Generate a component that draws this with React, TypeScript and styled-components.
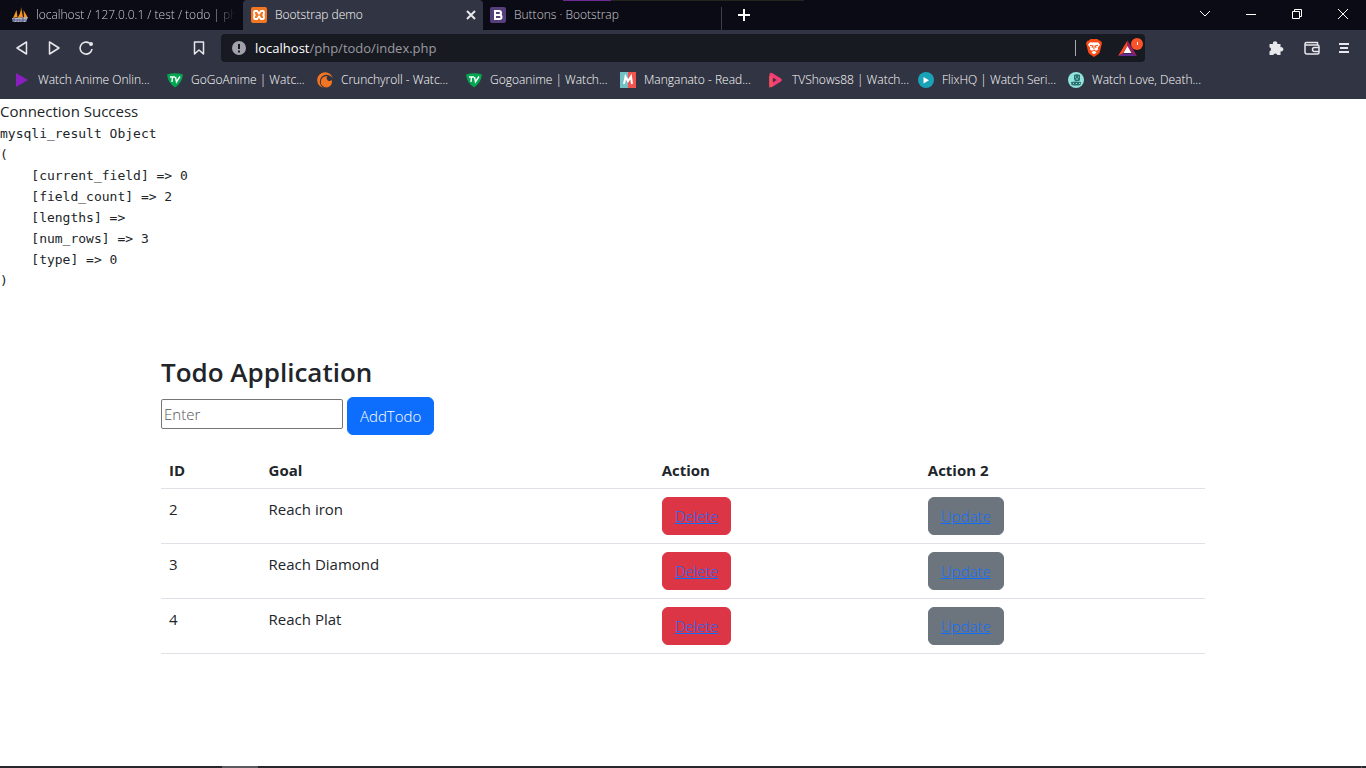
import React from "react";
import styled, { createGlobalStyle } from "styled-components";

const sans = `"Open Sans", "Noto Sans", sans-serif`;

const GlobalStyle = createGlobalStyle`
  *, *::before, *::after { box-sizing: border-box; }
  body { margin: 0; background: #fff; font-family: ${sans}; color: #212529; }
  button, input { font-family: inherit; }
  svg { display: block; flex: none; }
`;

const Window = styled.div`
  display: flex;
  flex-direction: column;
  min-height: 100vh;
`;

const Chrome = styled.header`
  background: #313442;
  color: #fff;
  height: 99px;
`;

const TabStrip = styled.div`
  position: relative;
  display: flex;
  align-items: stretch;
  height: 30px;
  background: #0b0b15;
`;

const TopEdge = styled.span`
  position: absolute;
  top: 0;
  left: 563px;
  width: 241px;
  height: 1px;
  background: linear-gradient(to right, #6b2a94 48px, #25251f 48px);
`;

const Tab = styled.div<{ $active?: boolean; $width: number; $inset: number }>`
  display: flex;
  align-items: center;
  gap: 8px;
  width: ${p => p.$width}px;
  padding: 0 7px 0 ${p => p.$inset}px;
  background: ${p => (p.$active ? "#313442" : "transparent")};
  border-radius: 4px 4px 0 0;
  color: ${p => (p.$active ? "#fff" : "#cdced2")};
  font-size: 12px;
  font-weight: 300;
  line-height: 16px;
`;

const TabTitle = styled.span<{ $fade?: boolean }>`
  flex: 1;
  min-width: 0;
  overflow: hidden;
  white-space: nowrap;
  ${p => p.$fade && "mask-image: linear-gradient(to right, #000 88%, transparent);"}
`;

const IconButton = styled.button`
  display: flex;
  align-items: center;
  justify-content: center;
  padding: 0;
  border: 0;
  background: transparent;
  color: #e8e8ec;
`;

const NewTab = styled(IconButton)`
  width: 46px;
  position: relative;
  color: #fff;
  &::before {
    content: "";
    position: absolute;
    left: 0;
    top: 7px;
    bottom: 0;
    width: 1px;
    background: #3c3d45;
  }
`;

const WindowControls = styled.div`
  display: flex;
  margin-left: auto;
`;

const ControlButton = styled(IconButton)`
  width: 46px;
  height: 28px;
  color: #fff;
`;

const Toolbar = styled.div`
  display: flex;
  align-items: center;
  height: 36px;
  padding: 0 17px 0 6px;
`;

const ToolButton = styled(IconButton)`
  width: 32px;
  height: 28px;
`;

const SaveButton = styled(ToolButton)`
  margin-left: 81px;
  margin-right: 6px;
`;

const AddressBar = styled.div`
  display: flex;
  align-items: center;
  gap: 9px;
  flex: 1;
  height: 28px;
  padding: 0 1px 0 11px;
  border-radius: 4px;
  background: #181a21;
`;

const Address = styled.a`
  flex: 1;
  color: #9a9ba1;
  font-size: 13px;
  line-height: 20px;
  text-decoration: none;
`;

const Host = styled.span`
  color: #fff;
`;

const Shields = styled.div`
  display: flex;
  align-items: center;
  gap: 16px;
  padding-left: 11px;
  background: linear-gradient(#aaabb0, #aaabb0) left center / 1px 16px no-repeat;
`;

const ToolGroup = styled.div`
  display: flex;
  align-items: center;
  justify-content: space-between;
  width: 81px;
  margin-left: 123px;
`;

const Bookmarks = styled.nav`
  display: flex;
  height: 28px;
  padding-left: 14px;
`;

const Bookmark = styled.a<{ $width: number }>`
  display: flex;
  align-items: center;
  gap: 8px;
  width: ${p => p.$width}px;
  color: #fff;
  font-size: 12px;
  font-weight: 300;
  line-height: 16px;
  white-space: nowrap;
  text-decoration: none;
`;

const Page = styled.main`
  flex: 1;
`;

const Message = styled.div`
  font-size: 15px;
  line-height: 24px;
`;

const Dump = styled.pre`
  margin: 0 0 65px;
  font-family: "DejaVu Sans Mono", monospace;
  font-size: 13px;
  line-height: 21px;
`;

const Container = styled.section`
  max-width: 1140px;
  margin: 0 auto;
  padding: 0 48px;
`;

const Title = styled.h1`
  margin: 0 0 8px;
  font-size: 26px;
  font-weight: 600;
  line-height: 33px;
`;

const TodoForm = styled.form`
  display: flex;
  align-items: flex-start;
  gap: 4px;
  margin-bottom: 13px;
`;

const GoalInput = styled.input`
  width: 182px;
  height: 30px;
  margin-top: 2px;
  padding: 1px 2px;
  border: 1px solid #767676;
  border-radius: 2px;
  font-size: 15px;
  font-weight: 300;
  &::placeholder { color: #555; }
`;

const tones = { primary: "#0d6efd", danger: "#dc3545", secondary: "#6c757d" };

const Button = styled.button<{ $tone: keyof typeof tones }>`
  display: block;
  height: 38px;
  padding: 0 12px;
  border: 1px solid ${p => tones[p.$tone]};
  border-radius: 6px;
  background: ${p => tones[p.$tone]};
  color: #fff;
  font-size: 15px;
  font-weight: 300;
  line-height: 24px;
  a { color: #0d6efd; }
`;

const Table = styled.table`
  width: 100%;
  border-collapse: collapse;
  font-size: 15px;
  line-height: 24px;
  th, td {
    padding: 8px;
    border-bottom: 1px solid #dee2e6;
    text-align: left;
    vertical-align: top;
  }
  th { padding: 10px 8px 6px; font-weight: 700; }
`;

const Taskbar = styled.footer`
  display: flex;
  height: 2px;
  padding: 0 4px 0 222px;
  justify-content: space-between;
  background: #29272b;
`;

const TaskItem = styled.span<{ $width: number }>`
  width: ${p => p.$width}px;
  background: #5c5a5e;
`;

const Play = () => (
  <svg width="16" height="16" viewBox="0 0 16 16"><path d="M2 1v14l12-7z" fill="#8a1fc0" /></svg>
);
const TvShield = () => (
  <svg width="16" height="16" viewBox="0 0 16 16">
    <path d="M0 2.500Q8 0 16 2.500Q15 11 8 15.500Q1 11 0 2.500z" fill="#05a651" />
    <path d="M3 5h5M5.500 5L5 10M8.500 5l1 5L13 4.500" fill="none" stroke="#fff" strokeWidth="1.400" />
  </svg>
);
const Crunchy = () => (
  <svg width="16" height="16" viewBox="0 0 16 16">
    <path d="M15.900 7A7.900 7.900 0 1 0 7 15.900A6.800 6.800 0 1 1 15.900 7z" fill="#f47521" />
    <path d="M15 9.500A5.600 5.600 0 1 1 10.500 4.300A2.400 2.400 0 1 0 14.500 8z" fill="#f47521" />
  </svg>
);
const MangaM = () => (
  <svg width="16" height="16" viewBox="0 0 16 16">
    <path d="M0 0h8v16H0z" fill="#72bfc4" /><path d="M8 0h8v16H8z" fill="#f0544f" />
    <path d="M4 12L5.500 4.500L8 9l3-4.500L12 12" fill="none" stroke="#fff" strokeWidth="2" />
  </svg>
);
const PinkPlay = () => (
  <svg width="16" height="16" viewBox="0 0 16 16">
    <path d="M3.200 2.500v11L12 8z" fill="none" stroke="#f43c72" strokeWidth="3.500" strokeLinejoin="round" />
    <path d="M2.500 4v9.500L5 12" fill="none" stroke="#f3525d" strokeWidth="2.500" />
  </svg>
);
const TealPlay = () => (
  <svg width="16" height="16" viewBox="0 0 16 16"><circle cx="8" cy="8" r="8" fill="#19a2b8" /><path d="M5.500 5v6.500l5.500-3.250z" fill="#fff" /></svg>
);
const Mint = () => (
  <svg width="16" height="16" viewBox="0 0 16 16">
    <circle cx="8" cy="8" r="8" fill="#8ee3dc" />
    <path d="M6 3q3-1.500 6 0v5l-1 1H7L6 7zM3 10q5-1 10 0l-.5 3Q8 14 3.500 13z" fill="#2d6f70" />
    <path d="M7 5h1m2 0h1M5 11.500h1m2 0h1m2 0h1M8 7h2" stroke="#8ee3dc" />
  </svg>
);
const Sails = () => (
  <svg width="16" height="16" viewBox="0 0 16 16">
    <path d="M4.500 3L5.500 10L1 11zM9 0L11 10L5.500 11Q9 6 9 0zM11.500 3l4 7-3.500 1z" fill="#f79520" />
    <path d="M0 11l16-1-2 5H1z" fill="#bbb7b5" />
    <path d="M1 15v-3h2v2H1m4-2v3m0-2h3m0-1v3m2 0v-3h2v2h-2m4-2v3" fill="none" stroke="#4d5b98" />
  </svg>
);
const Xampp = () => (
  <svg width="16" height="16" viewBox="0 0 16 16">
    <rect width="16" height="16" rx="2" fill="#f37623" />
    <path d="M4 4h2l2 2.500L10 4h2q1 0 1 2t-1.500 2Q13 8 13 10t-1 2h-2L8 9.500L6 12H4q-1 0-1-2t1.500-2Q3 8 3 6t1-2z" fill="none" stroke="#fff" strokeWidth="1.800" />
  </svg>
);
const BootstrapMark = () => (
  <svg width="16" height="16" viewBox="0 0 16 16">
    <rect width="16" height="16" rx="2" fill="#563d7c" />
    <path d="M5 4h4q2 0 2 2t-2 2H5zm0 4h4.500q2 0 2 2t-2 2H5z" fill="none" stroke="#fff" strokeWidth="2" />
  </svg>
);

const Stroke = ({ d, size = 16, width = 1.5 }: { d: string; size?: number; width?: number }) => (
  <svg width={size} height={size} viewBox={`0 0 ${size} ${size}`} fill="none" stroke="currentColor" strokeWidth={width} strokeLinejoin="round">
    <path d={d} />
  </svg>
);

const Reload = () => (
  <svg width="16" height="16" viewBox="0 0 16 16" fill="none" stroke="currentColor" strokeWidth="1.600">
    <path d="M14 9A6 6 0 1 1 11.500 3.200" /><circle cx="13" cy="4" r="2" fill="currentColor" stroke="none" />
  </svg>
);
const Info = () => (
  <svg width="14" height="14" viewBox="0 0 14 14"><circle cx="7" cy="7" r="7" fill="#a0a1aa" /><path d="M7 3v5M7 9.500v2" stroke="#181a21" strokeWidth="2" /></svg>
);
const BraveLion = () => (
  <svg width="16" height="18" viewBox="0 0 16 18">
    <path d="M4.500 0h7L13 1.500l1.500.2L16 4l-.5 2-1.800 7.500Q13 15 8 18Q3 15 2.300 13.500L.5 6 0 4l1.500-2.300L3 1.500z" fill="#fb4a14" />
    <path d="M4 3.200L6.500 3.500 8 3.200l1.500.3L12 3.200l2 2.600-2.200 3 .4 1.700-2.700 1.700 1 1.500L8 15.200l-2.500-1.500 1-1.500-2.700-1.700.4-1.700L2 5.800z" fill="#fff" />
    <path d="M4 6.300l2.600.4L6 9M12 6.300l-2.600.4L10 9M8 6.500v3.700M6 12.300l2-1.300 2 1.300" fill="none" stroke="#fb4a14" strokeWidth="1" />
  </svg>
);
const Rewards = () => (
  <svg width="26" height="20" viewBox="0 0 26 20">
    <path d="M9.500 2.500L0 18l5-2.500L9.500 8z" fill="#ff4724" />
    <path d="M0 18h19l-5-2.500H5z" fill="#662d91" />
    <path d="M9.500 2.500L19 18l-5-2.500L9.500 8z" fill="#9e1f63" />
    <path d="M9.500 8L5.500 15h8z" fill="#fff" />
    <circle cx="19" cy="6" r="6" fill="#fb542b" /><path d="M19.500 4v3" stroke="#fff" />
  </svg>
);
const Puzzle = () => (
  <svg width="16" height="16" viewBox="0 0 16 16">
    <path d="M1.500 4H5a2.200 2.200 0 1 1 4.200 0H12.500v3.200a2.200 2.200 0 1 1 0 4.200V15H9.400a2.200 2.200 0 0 0-4.200 0H1.500v-3.600a2.200 2.200 0 0 0 0-4.200z" fill="currentColor" />
  </svg>
);

const bookmarks: [() => React.JSX.Element, string, number][] = [
  [Play, "Watch Anime Onlin...", 153],
  [TvShield, "GoGoAnime | Watc...", 150],
  [Crunchy, "Crunchyroll - Watc...", 149],
  [TvShield, "Gogoanime | Watch...", 154],
  [MangaM, "Manganato - Read...", 148],
  [PinkPlay, "TVShows88 | Watch...", 150],
  [TealPlay, "FlixHQ | Watch Seri...", 150],
  [Mint, "Watch Love, Death...", 150],
];

const todos = [
  { id: 2, goal: "Reach iron" },
  { id: 3, goal: "Reach Diamond" },
  { id: 4, goal: "Reach Plat" },
];

const dump = `mysqli_result Object
(
    [current_field] => 0
    [field_count] => 2
    [lengths] => 
    [num_rows] => 3
    [type] => 0
)`;

export default function App() {
  return (
    <Window>
      <GlobalStyle />
      <Chrome>
        <TabStrip>
          <TopEdge />
          <Tab $width={243} $inset={12}><Sails /><TabTitle $fade>localhost / 127.0.0.1 / test / todo | php</TabTitle></Tab>
          <Tab $active $width={240} $inset={8}>
            <Xampp /><TabTitle>Bootstrap demo</TabTitle>
            <IconButton aria-label="Close tab"><Stroke size={10} width={2} d="M1 1l8 8M9 1L1 9" /></IconButton>
          </Tab>
          <Tab $width={238} $inset={7}><BootstrapMark /><TabTitle>Buttons · Bootstrap</TabTitle></Tab>
          <NewTab aria-label="New tab"><Stroke size={12} width={2} d="M6 0v12M0 6h12" /></NewTab>
          <WindowControls>
            <ControlButton aria-label="Search tabs"><Stroke size={12} width={1} d="M1 3l5 5 5-5" /></ControlButton>
            <ControlButton aria-label="Minimize"><Stroke size={10} width={1} d="M0 5.500h10" /></ControlButton>
            <ControlButton aria-label="Restore"><Stroke size={10} width={1} d="M.5 2.500h7v7h-7zM2.500 2.500v-2h7v7h-2" /></ControlButton>
            <ControlButton aria-label="Close"><Stroke size={10} width={1} d="M0 0l10 10M10 0L0 10" /></ControlButton>
          </WindowControls>
        </TabStrip>
        <Toolbar>
          <ToolButton aria-label="Back"><Stroke d="M12.500 2v12L3 8z" /></ToolButton>
          <ToolButton aria-label="Forward"><Stroke d="M3.500 2v12L13 8z" /></ToolButton>
          <ToolButton aria-label="Reload"><Reload /></ToolButton>
          <SaveButton aria-label="Bookmark this page"><Stroke d="M3.500 2h9v12L8 10l-4.500 4z" /></SaveButton>
          <AddressBar>
            <Info />
            <Address href="#"><Host>localhost</Host>/php/todo/index.php</Address>
            <Shields>
              <BraveLion />
              <Rewards />
            </Shields>
          </AddressBar>
          <ToolGroup>
            <IconButton aria-label="Extensions"><Puzzle /></IconButton>
            <IconButton aria-label="Wallet"><Stroke d="M13.500 5V2.500h-11Q1 2.500 1 4v8q0 2 2 2h10.500q1.500 0 1.500-1.500v-6Q15 5 13.500 5H1M15 7.500h-4.500a2 2 0 0 0 0 4H15" /></IconButton>
            <IconButton aria-label="Menu"><Stroke size={10} width={2} d="M0 1h10M1 5h8M0 9h10" /></IconButton>
          </ToolGroup>
        </Toolbar>
        <Bookmarks aria-label="Bookmarks">
          {bookmarks.map(([Icon, label, width]) => (
            <Bookmark href="#" key={label} $width={width}><Icon />{label}</Bookmark>
          ))}
        </Bookmarks>
      </Chrome>
      <Page>
        <Message>Connection Success</Message>
        <Dump>{dump}</Dump>
        <Container>
          <Title>Todo Application</Title>
          <TodoForm onSubmit={e => e.preventDefault()}>
            <GoalInput aria-label="Goal" placeholder="Enter" />
            <Button $tone="primary">AddTodo</Button>
          </TodoForm>
          <Table>
            <thead>
              <tr><th>ID</th><th>Goal</th><th>Action</th><th>Action 2</th></tr>
            </thead>
            <tbody>
              {todos.map(t => (
                <tr key={t.id}>
                  <td>{t.id}</td>
                  <td>{t.goal}</td>
                  <td><Button $tone="danger"><a href="#">Delete</a></Button></td>
                  <td><Button $tone="secondary"><a href="#">Update</a></Button></td>
                </tr>
              ))}
            </tbody>
          </Table>
        </Container>
      </Page>
      <Taskbar><TaskItem $width={36} /><TaskItem $width={1} /></Taskbar>
    </Window>
  );
}
